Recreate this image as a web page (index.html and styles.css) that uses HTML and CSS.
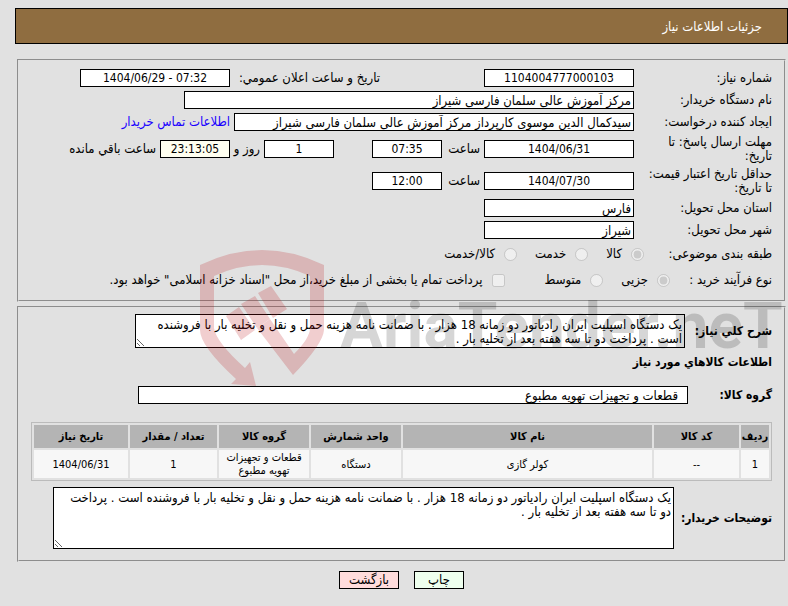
FILE: index.html
```html
<!DOCTYPE html>
<html lang="fa" dir="rtl">
  <head>
    <meta charset="UTF-8" />
    <title>جزئیات اطلاعات نیاز</title>
    <link rel="stylesheet" href="styles.css">
  </head>
  <body>
    <header class="title-bar">جزئیات اطلاعات نیاز</header>

    <main>
      <section class="panel need">
        <div class="row">
          <label class="name" for="needNo">شماره نیاز:</label>
          <input class="box date" id="needNo" value="1104004777000103" readonly>
          <label class="announce" for="announce">تاریخ و ساعت اعلان عمومي:</label>
          <input class="box date" id="announce" dir="ltr" value="1404/06/29 - 07:32" readonly>
        </div>
        <div class="row">
          <label class="name" for="buyer">نام دستگاه خریدار:</label>
          <input class="box buyer" id="buyer" value="مرکز آموزش عالی سلمان فارسی شیراز" readonly>
        </div>
        <div class="row">
          <label class="name" for="creator">ایجاد کننده درخواست:</label>
          <input class="box creator" id="creator" value="سیدکمال الدین موسوی کارپرداز مرکز آموزش عالی سلمان فارسی شیراز" readonly>
          <a class="contact" href="#">اطلاعات تماس خریدار</a>
        </div>
        <div class="row tall">
          <label class="name" for="deadline">مهلت ارسال پاسخ: تا تاریخ:</label>
          <input class="box date" id="deadline" value="1404/06/31" readonly>
          <label class="hour" for="deadlineTime">ساعت</label>
          <input class="box time" id="deadlineTime" value="07:35" readonly>
          <input class="box time days" id="days" value="1" readonly>
          <label class="and" for="days">روز و</label>
          <input class="box time remain" id="remain" value="23:13:05" readonly>
          <label for="remain">ساعت باقي مانده</label>
        </div>
        <div class="row tall">
          <label class="name" for="validity">حداقل تاریخ اعتبار قیمت: تا تاریخ:</label>
          <input class="box date" id="validity" value="1404/07/30" readonly>
          <label class="hour" for="validityTime">ساعت</label>
          <input class="box time" id="validityTime" value="12:00" readonly>
        </div>
        <div class="row">
          <label class="name" for="province">استان محل تحویل:</label>
          <input class="box place" id="province" value="فارس" readonly>
        </div>
        <div class="row">
          <label class="name" for="city">شهر محل تحویل:</label>
          <input class="box place" id="city" value="شیراز" readonly>
        </div>
        <div class="row choices">
          <span class="kind-name">طبقه بندی موضوعی:</span>
          <input type="radio" name="kind" id="goods" checked disabled>
          <label for="goods">کالا</label>
          <input type="radio" name="kind" id="service" disabled>
          <label for="service">خدمت</label>
          <input type="radio" name="kind" id="both" disabled>
          <label for="both">کالا/خدمت</label>
        </div>
        <div class="row choices">
          <span class="process-name">نوع فرآیند خرید :</span>
          <input type="radio" name="process" id="small" checked disabled>
          <label for="small">جزیی</label>
          <input type="radio" name="process" id="medium" disabled>
          <label class="medium" for="medium">متوسط</label>
          <input type="checkbox" id="treasury" disabled>
          <label class="treasury" for="treasury">پرداخت تمام یا بخشی از مبلغ خرید،از محل "اسناد خزانه اسلامی" خواهد بود.</label>
        </div>
      </section>

      <section class="panel items">
        <div class="row">
          <label class="strong summary-name" for="summary">شرح کلي نیاز:</label>
          <textarea class="summary" id="summary" readonly>یک دستگاه اسپلیت ایران رادیاتور دو زمانه 18 هزار . با ضمانت نامه هزینه حمل و نقل و تخلیه بار با فروشنده است . پرداخت دو تا سه هفته بعد از تخلیه بار .</textarea>
        </div>
        <h2 class="strong">اطلاعات کالاهاي مورد نیاز</h2>
        <div class="row">
          <label class="strong group-name" for="group">گروه کالا:</label>
          <input class="box group" id="group" value="قطعات و تجهیزات تهویه مطبوع" readonly>
        </div>
        <table class="goods-table">
          <tr>
            <th class="c-row">ردیف</th>
            <th class="c-code">کد کالا</th>
            <th>نام کالا</th>
            <th class="c-unit">واحد شمارش</th>
            <th class="c-group">گروه کالا</th>
            <th class="c-count">تعداد / مقدار</th>
            <th class="c-date">تاریخ نیاز</th>
          </tr>
          <tr>
            <td>1</td>
            <td>--</td>
            <td>کولر گازی</td>
            <td>دستگاه</td>
            <td>قطعات و تجهیزات تهویه مطبوع</td>
            <td>1</td>
            <td>1404/06/31</td>
          </tr>
        </table>
        <div class="row">
          <label class="strong notes-name" for="notes">توضیحات خریدار:</label>
          <textarea class="notes" id="notes" readonly>یک دستگاه اسپلیت ایران رادیاتور دو زمانه 18 هزار . با ضمانت نامه هزینه حمل و نقل و تخلیه بار با فروشنده است . پرداخت دو تا سه هفته بعد از تخلیه بار .</textarea>
        </div>
      </section>

      <div class="buttons">
        <button class="print" type="button">چاپ</button>
        <button class="back" type="button">بازگشت</button>
      </div>
    </main>

    <div class="watermark" dir="ltr">
      <svg class="shield" viewBox="0 0 126 138" width="126" height="138">
        <path d="M0 15Q62-15 124 15V80Q123 94 93 125L57 78L70 69L94 104Q110 88 110 78V26Q62 4 14 26V78Q16 92 45 118L50 112L56 136L31 134L36 129Q0 96 0 80Z" />
        <path d="M58 43L71 36L87 59L73 68ZM41 54L55 46L70 69L57 78ZM26 66L39 57L55 80L41 90Z" />
      </svg>
      <span class="brand">AriaTender.neT</span>
    </div>
  </body>
</html>
```
FILE: styles.css
```css
body {
  margin: 8px 0 0 15px;
  background-color: #e1e1e1;
  color: #000;
  font: 13px/14px "DejaVu Sans Condensed", "DejaVu Sans", sans-serif;
}
.title-bar {
  box-sizing: border-box;
  height: 36px;
  padding: 11px 25px;
  border: 1px solid #000;
  background-color: #8f6d40;
  color: #fff;
}
main {
  padding: 15px 2px 0;
}
.panel {
  border: 2px groove #e1e1e1;
  margin-bottom: 4px;
  padding: 6px 12px 7px;
}
.row {
  display: flex;
  align-items: center;
  min-height: 22px;
}
.name {
  width: 138px;
  box-sizing: border-box;
  padding-left: 8px;
  flex: none;
}
.box,
textarea,
button {
  box-sizing: border-box;
  border: 1px solid #000;
  border-radius: 0;
  background-color: #fff;
  color: #000;
  font: inherit;
}
.box {
  height: 18px;
  padding: 0 2px;
}
.date,
.place {
  width: 150px;
}
.date,
.time {
  font-size: 12px;
  text-align: center;
}
.time {
  width: 70px;
}
.buyer {
  width: 450px;
}
.creator {
  width: 400px;
}
.announce {
  width: 150px;
  margin-right: 104px;
}
.contact {
  margin-right: 4px;
  color: #1a00ff;
  text-decoration: none;
}
.tall {
  min-height: 32px;
}
.hour {
  width: 34px;
  margin: 0 4px;
}
.days {
  margin-right: 38px;
}
.and {
  width: 26px;
  margin: 0 4px;
  white-space: nowrap;
}
.remain {
  background-color: #fffff0;
  margin-left: 4px;
}
.choices {
  min-height: 26px;
}
.choices input {
  width: 13px;
  height: 13px;
  margin: 0;
}
.choices label {
  margin: 0 9px 0 18px;
}
.kind-name {
  width: 128px;
}
.process-name {
  width: 102px;
}
.choices .medium {
  margin-left: 40px;
}
.choices .treasury {
  margin-left: 0;
}
.strong {
  margin: 0;
  font-size: 12px;
  font-weight: bold;
}
.items {
  padding: 6px 12px 11px;
}
.items .strong {
  flex: none;
}
.summary,
.notes {
  margin-right: 4px;
  padding: 3px 2px 3px 8px;
}
.summary {
  width: 550px;
  height: 34px;
}
.items h2 {
  margin: 7px 0 15px;
}
.summary-name {
  width: 83px;
}
.notes-name {
  width: 94px;
}
.group-name {
  width: 84px;
}
.group {
  width: 550px;
  padding: 0 9px;
}
.goods-table {
  width: 100%;
  margin: 16px 0 6px;
  border: 1px solid #bbb;
  border-spacing: 2px;
  table-layout: fixed;
  font-size: 11px;
  line-height: 13px;
  text-align: center;
}
th {
  height: 23px;
  padding: 0;
  background-color: #b4b4b4;
}
td {
  height: 28px;
  padding: 0;
  background-color: #f7f7f7;
}
.c-row {
  width: 28px;
}
.c-code {
  width: 85px;
}
.c-unit,
.c-group {
  width: 90px;
}
.c-count {
  width: 87px;
}
.c-date {
  width: 94px;
}
.notes {
  width: 621px;
  height: 62px;
}
.buttons {
  display: flex;
  justify-content: center;
  gap: 15px;
  padding: 5px 0;
}
.print,
.back {
  height: 18px;
  padding: 0;
}
.print {
  width: 50px;
  background-color: #efe;
}
.back {
  width: 60px;
  background-color: #ffdcdc;
}
.watermark {
  position: absolute;
  top: 250px;
  left: 200px;
  display: flex;
  pointer-events: none;
}
.shield {
  fill: #b80d12;
  opacity: 0.2;
}
.brand {
  margin: 37px 0 0 14px;
  color: #000;
  opacity: 0.16;
  font: bold 64px/80px Roboto, sans-serif;
}
```
